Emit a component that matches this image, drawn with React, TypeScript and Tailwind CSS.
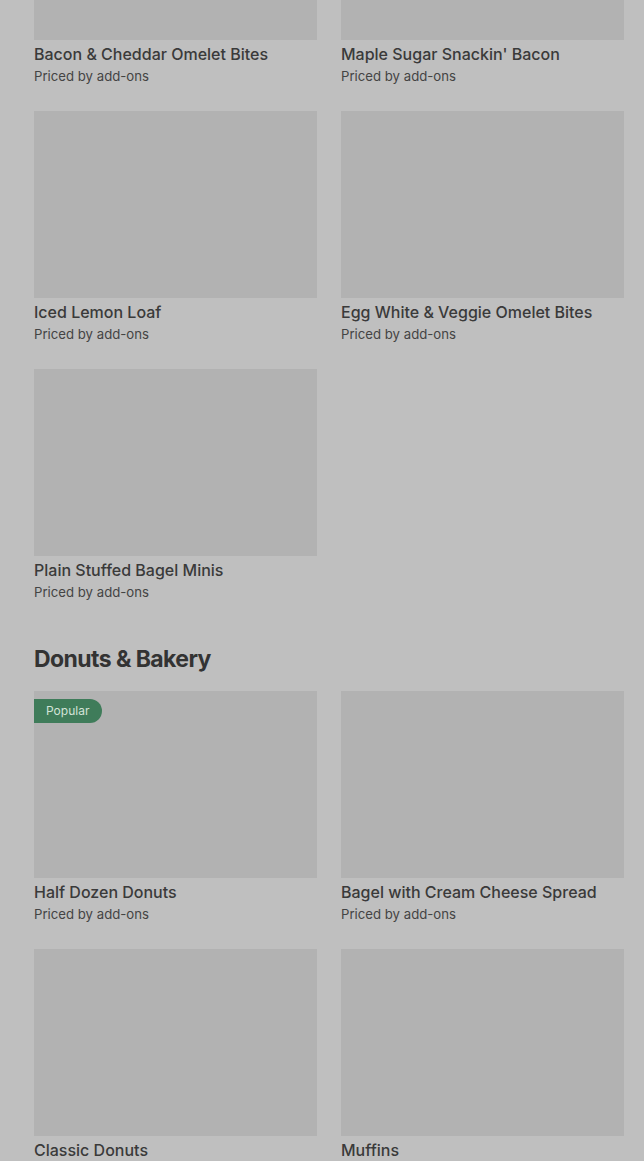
const breakfast = [
  "Bacon & Cheddar Omelet Bites",
  "Maple Sugar Snackin' Bacon",
  "Iced Lemon Loaf",
  "Egg White & Veggie Omelet Bites",
  "Plain Stuffed Bagel Minis",
];

const bakery = [
  { name: "Half Dozen Donuts", popular: true },
  { name: "Bagel with Cream Cheese Spread" },
  { name: "Classic Donuts" },
  { name: "Muffins" },
];

function ItemCard({ name, popular }: { name: string; popular?: boolean }) {
  return (
    <div>
      <div className="relative h-[187px] bg-[#b2b2b2]">
        {popular && (
          <span className="absolute left-0 top-2 h-6 pl-3 pr-[13px] rounded-r-full bg-[#3f7c5a] text-[#d3e3d8] text-xs leading-6">
            Popular
          </span>
        )}
      </div>
      <p className="mt-[2px] text-base leading-6 font-medium text-[#3a3a3a]">{name}</p>
      <p className="text-[13.2px] leading-5 text-[#444444]">Priced by add-ons</p>
    </div>
  );
}

export default function App() {
  return (
    <div
      className="min-h-screen bg-[#bfbfbf] overflow-hidden"
      style={{ fontFamily: "Inter, 'Liberation Sans', sans-serif" }}
    >
      <div className="pl-[34px] pr-5 -mt-[147px]">
        <div className="grid grid-cols-2 gap-x-6 gap-y-[25px]">
          {breakfast.map((name) => (
            <ItemCard key={name} name={name} />
          ))}
        </div>

        <h2 className="mt-[41px] mb-4 text-[23px] leading-8 font-bold tracking-tight text-[#333333]">
          Donuts &amp; Bakery
        </h2>

        <div className="grid grid-cols-2 gap-x-6 gap-y-[25px]">
          {bakery.map((item) => (
            <ItemCard key={item.name} name={item.name} popular={item.popular} />
          ))}
        </div>
      </div>
    </div>
  );
}
